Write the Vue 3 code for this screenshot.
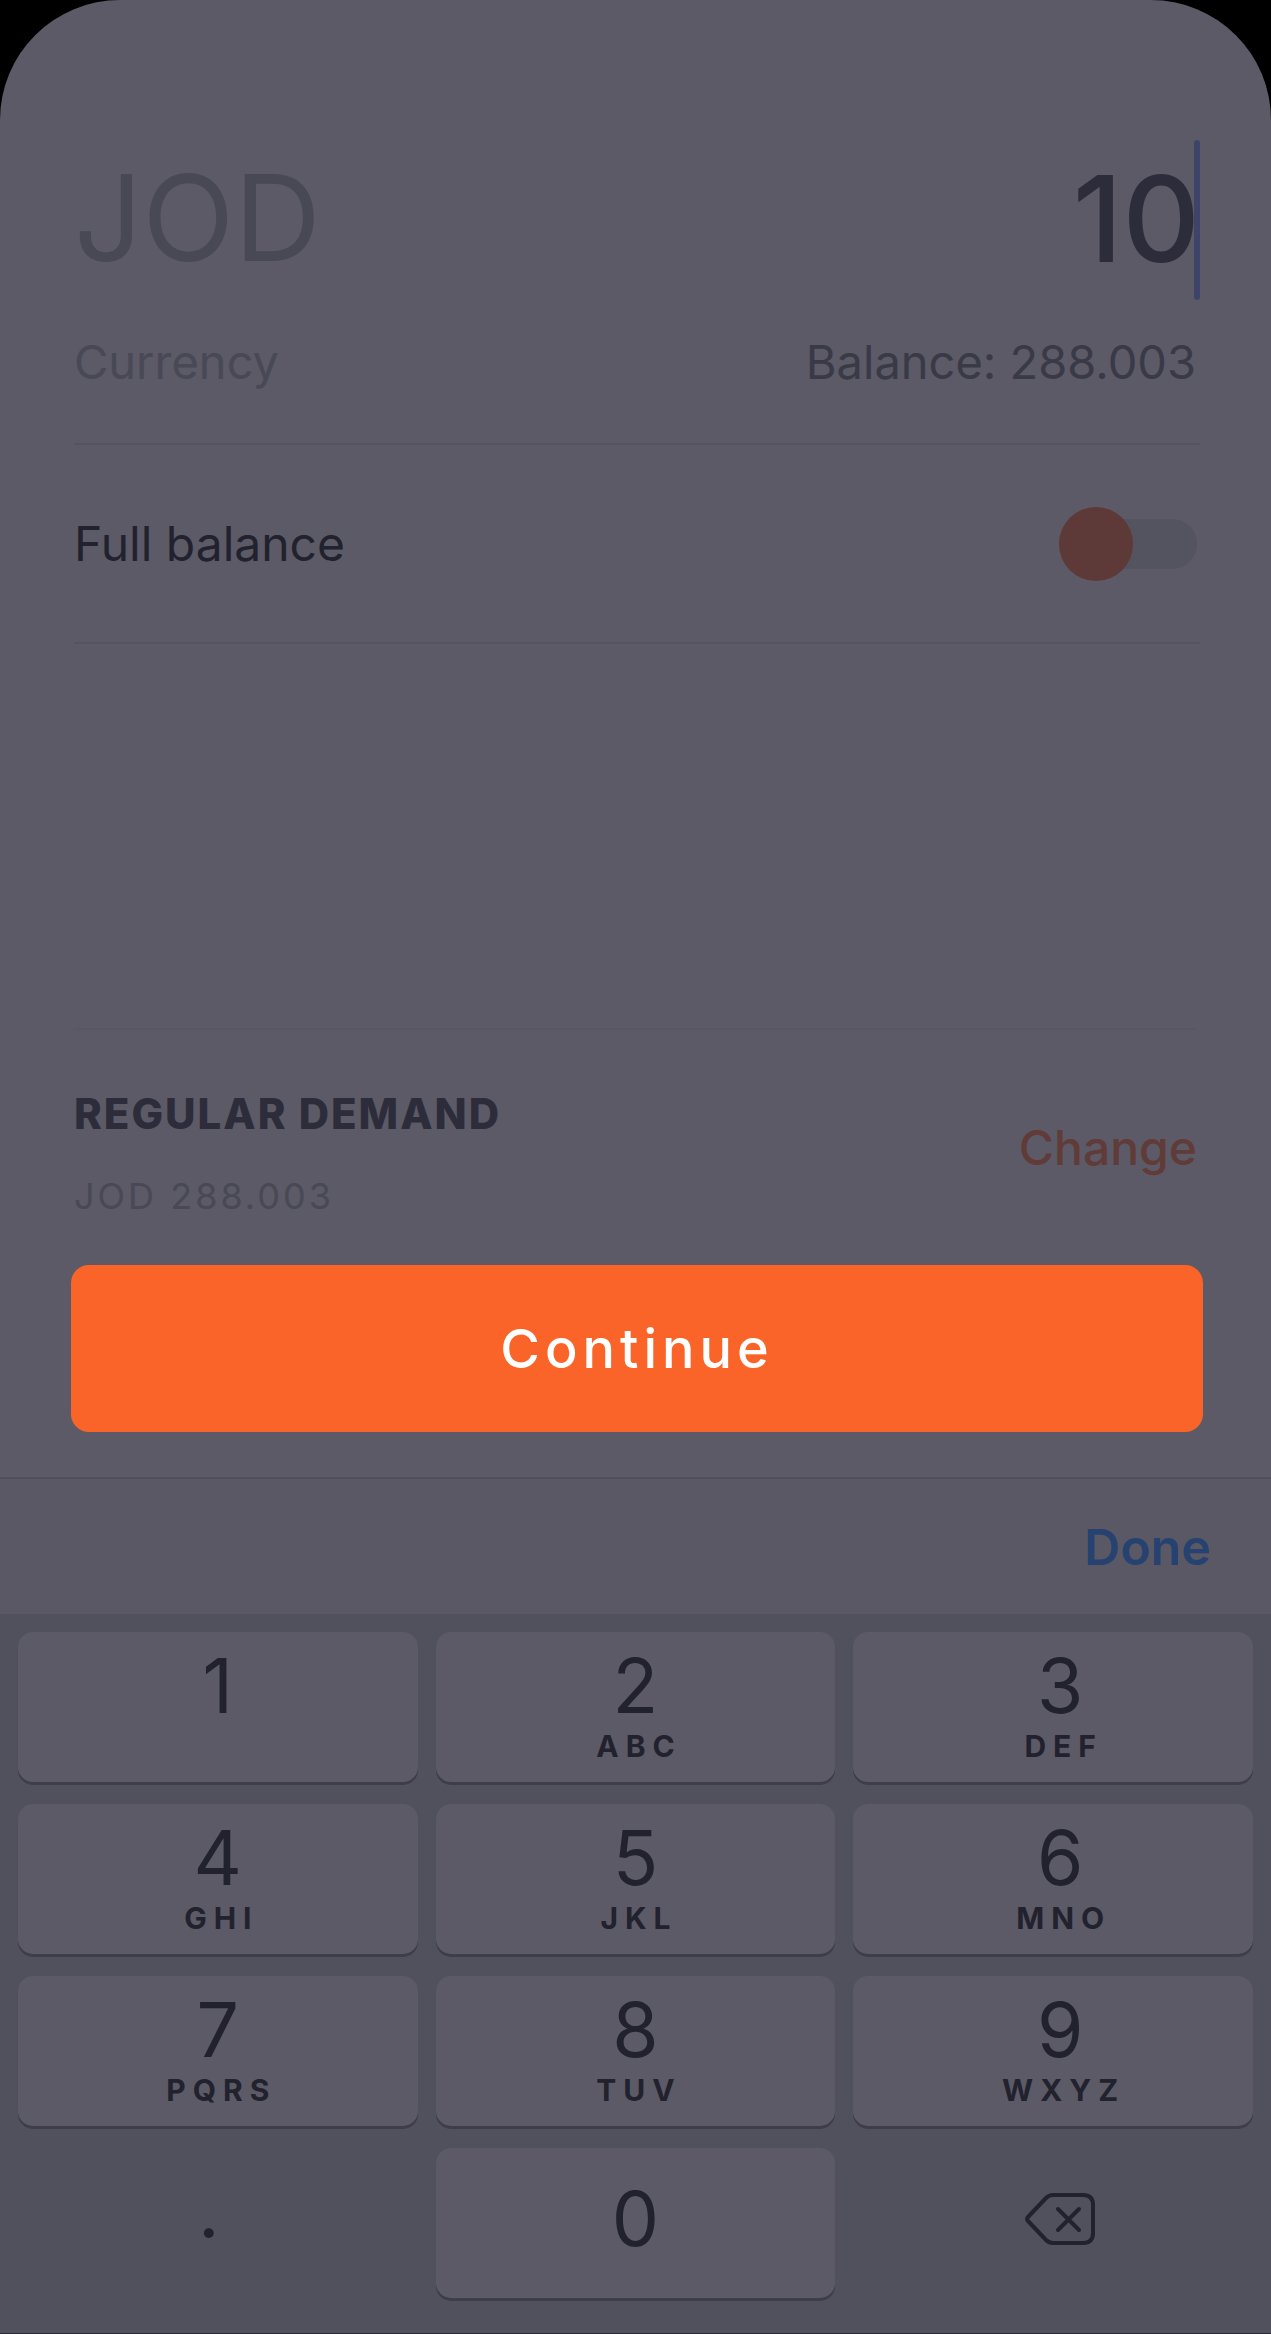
<template>
    <div class="screen">
        <main class="sheet">
            <section class="amount">
                <div class="amount-row">
                    <label class="currency" for="amount">JOD</label>
                    <div class="amount-field">
                        <input id="amount" v-model="amount" type="text" inputmode="decimal" />
                        <span class="caret"></span>
                    </div>
                </div>
                <div class="caption-row">
                    <span class="caption">Currency</span>
                    <span class="balance">Balance: {{ balance }}</span>
                </div>
            </section>

            <label class="full-balance">
                <span>Full balance</span>
                <span class="switch">
                    <input v-model="fullBalance" type="checkbox" />
                    <span class="track"></span>
                    <span class="thumb"></span>
                </span>
            </label>

            <div class="spacer"></div>

            <section class="account">
                <div class="account-info">
                    <h2>REGULAR DEMAND</h2>
                    <p>JOD {{ balance }}</p>
                </div>
                <button type="button" class="change">Change</button>
            </section>

            <button type="button" class="continue">Continue</button>
        </main>

        <div class="toolbar">
            <button type="button" class="done">Done</button>
        </div>

        <div class="keyboard">
            <button
                v-for="key in keys"
                :key="key.digit"
                type="button"
                class="key"
                :class="key.kind"
                @click="press(key.digit)"
            >
                <span class="digit">{{ key.digit }}</span>
                <span v-if="key.letters" class="letters">{{ key.letters }}</span>
            </button>
            <button type="button" class="key delete" aria-label="Delete" @click="erase">
                <svg viewBox="0 0 70 52" width="70" height="52" aria-hidden="true">
                    <path d="M28 2H58Q68 2 68 12V40Q68 50 58 50H28Q24 50 21 47L3 28Q1 26 3 24L21 5Q24 2 28 2Z" />
                    <path d="M33 16L54 37M54 16L33 37" />
                </svg>
            </button>
        </div>
    </div>
</template>

<script setup>
import { ref, watch } from 'vue';

const balance = '288.003';
const amount = ref('10');
const fullBalance = ref(false);

const keys = [
    { digit: '1', letters: '' },
    { digit: '2', letters: 'ABC' },
    { digit: '3', letters: 'DEF', kind: 'last' },
    { digit: '4', letters: 'GHI' },
    { digit: '5', letters: 'JKL' },
    { digit: '6', letters: 'MNO', kind: 'last' },
    { digit: '7', letters: 'PQRS' },
    { digit: '8', letters: 'TUV' },
    { digit: '9', letters: 'WXYZ', kind: 'last' },
    { digit: '.', letters: '', kind: 'dot' },
    { digit: '0', letters: '', kind: 'single' },
];

const press = (digit) => {
    if (digit === '.' && amount.value.includes('.')) return;
    amount.value += digit;
};

const erase = () => {
    amount.value = amount.value.slice(0, -1);
};

watch(fullBalance, (on) => {
    if (on) amount.value = balance;
});
</script>

<style>
body {
    margin: 0;
    background: #000;
}
</style>

<style scoped>
.screen {
    display: flex;
    flex-direction: column;
    box-sizing: border-box;
    min-height: 100vh;
    overflow: hidden;
    border-bottom: 1px solid #2a2935;
    border-radius: 120px 120px 0 0;
    background: #5b5a66;
    color: #22212e;
    font-family: Inter, "Liberation Sans", sans-serif;
}

button {
    padding: 0;
    border: 0;
    background: none;
    color: inherit;
    font-family: inherit;
    cursor: pointer;
}

.sheet {
    display: flex;
    flex: 1;
    flex-direction: column;
    padding: 140px 68px 45px 71px;
}

/* Amount */
.amount {
    margin: 0 3px;
    padding-bottom: 53px;
    border-bottom: 2px solid #545360;
}

.amount-row,
.caption-row {
    display: flex;
    align-items: center;
    justify-content: space-between;
}

.amount-row {
    height: 160px;
}

.currency {
    color: #494855;
    font-size: 120px;
    line-height: 156px;
    padding-bottom: 4px;
}

.amount-field {
    position: relative;
    flex: 1;
    min-width: 0;
}

.amount-field input {
    display: block;
    box-sizing: border-box;
    width: 100%;
    height: 160px;
    padding: 0 0 4px;
    border: 0;
    outline: none;
    background: none;
    color: #2d2c3b;
    font-family: inherit;
    font-size: 120px;
    font-weight: 500;
    text-align: right;
}

.caret {
    position: absolute;
    top: 0;
    right: 0;
    width: 6px;
    height: 160px;
    border-radius: 3px;
    background: #3e4469;
}

.caption-row {
    padding: 34px 4px 0 0;
    font-size: 47px;
    line-height: 56px;
}

.caption {
    color: #494855;
}

.balance {
    color: #3a3946;
}

/* Full balance switch */
.full-balance {
    display: flex;
    align-items: center;
    justify-content: space-between;
    height: 197px;
    margin: 0 3px;
    padding-right: 3px;
    border-bottom: 2px solid #545360;
    font-size: 48px;
}

.switch {
    position: relative;
    display: flex;
    align-items: center;
    width: 138px;
    height: 74px;
}

.switch input {
    position: absolute;
    inset: 0;
    margin: 0;
    opacity: 0;
}

.track {
    flex: 1;
    height: 50px;
    border-radius: 25px;
    background: #545360;
}

.thumb {
    position: absolute;
    left: 0;
    width: 74px;
    height: 74px;
    border-radius: 50%;
    background: #5d3a37;
}

.switch input:checked ~ .thumb {
    left: auto;
    right: 0;
}

.spacer {
    flex: 1;
}

/* Account */
.account {
    display: flex;
    align-items: center;
    justify-content: space-between;
    margin: 0 6px 0 3px;
    border-top: 2px solid #585763;
}

.account-info {
    padding: 60px 0 45px;
}

.account h2 {
    margin: 0 0 34px;
    color: #2d2c3b;
    font-size: 42px;
    font-weight: 800;
    line-height: 48px;
    letter-spacing: 2px;
}

.account p {
    margin: 0;
    color: #494855;
    font-size: 36px;
    line-height: 48px;
    letter-spacing: 3px;
}

.change {
    color: #603b38;
    font-size: 48px;
    font-weight: 500;
}

.continue {
    height: 167px;
    border-radius: 18px;
    background: #fb6428;
    color: #fff;
    font-size: 54px;
    font-weight: 500;
    letter-spacing: 5px;
}

/* Keyboard */
.toolbar {
    display: flex;
    align-items: center;
    justify-content: flex-end;
    height: 135px;
    padding: 0 60px;
    border-top: 2px solid #504f5b;
    background: #595864;
}

.done {
    color: #254270;
    font-size: 50px;
    font-weight: 600;
}

.keyboard {
    display: grid;
    grid-template-columns: repeat(3, 1fr);
    gap: 22px 18px;
    padding: 18px 18px 35px;
    background: #51505d;
}

.key {
    display: flex;
    flex-direction: column;
    align-items: center;
    box-sizing: border-box;
    height: 150px;
    padding-top: 16px;
    border-radius: 15px;
    background: #5b5a66;
    box-shadow: 0 3px 0 #3e3d4a;
}

.digit {
    font-size: 75px;
    line-height: 76px;
}

.letters {
    margin-top: 6px;
    padding-left: 7px;
    font-size: 30px;
    font-weight: 700;
    line-height: 32px;
    letter-spacing: 7px;
}

.last,
.delete {
    padding-left: 14px;
}

.single,
.dot,
.delete {
    justify-content: center;
    padding-top: 0;
    padding-bottom: 8px;
}

.dot,
.delete {
    background: none;
    box-shadow: none;
}

.dot {
    padding-right: 18px;
    padding-bottom: 24px;
}

.delete svg {
    fill: none;
    stroke: #22212e;
    stroke-width: 4;
    stroke-linecap: round;
    stroke-linejoin: round;
}
</style>
